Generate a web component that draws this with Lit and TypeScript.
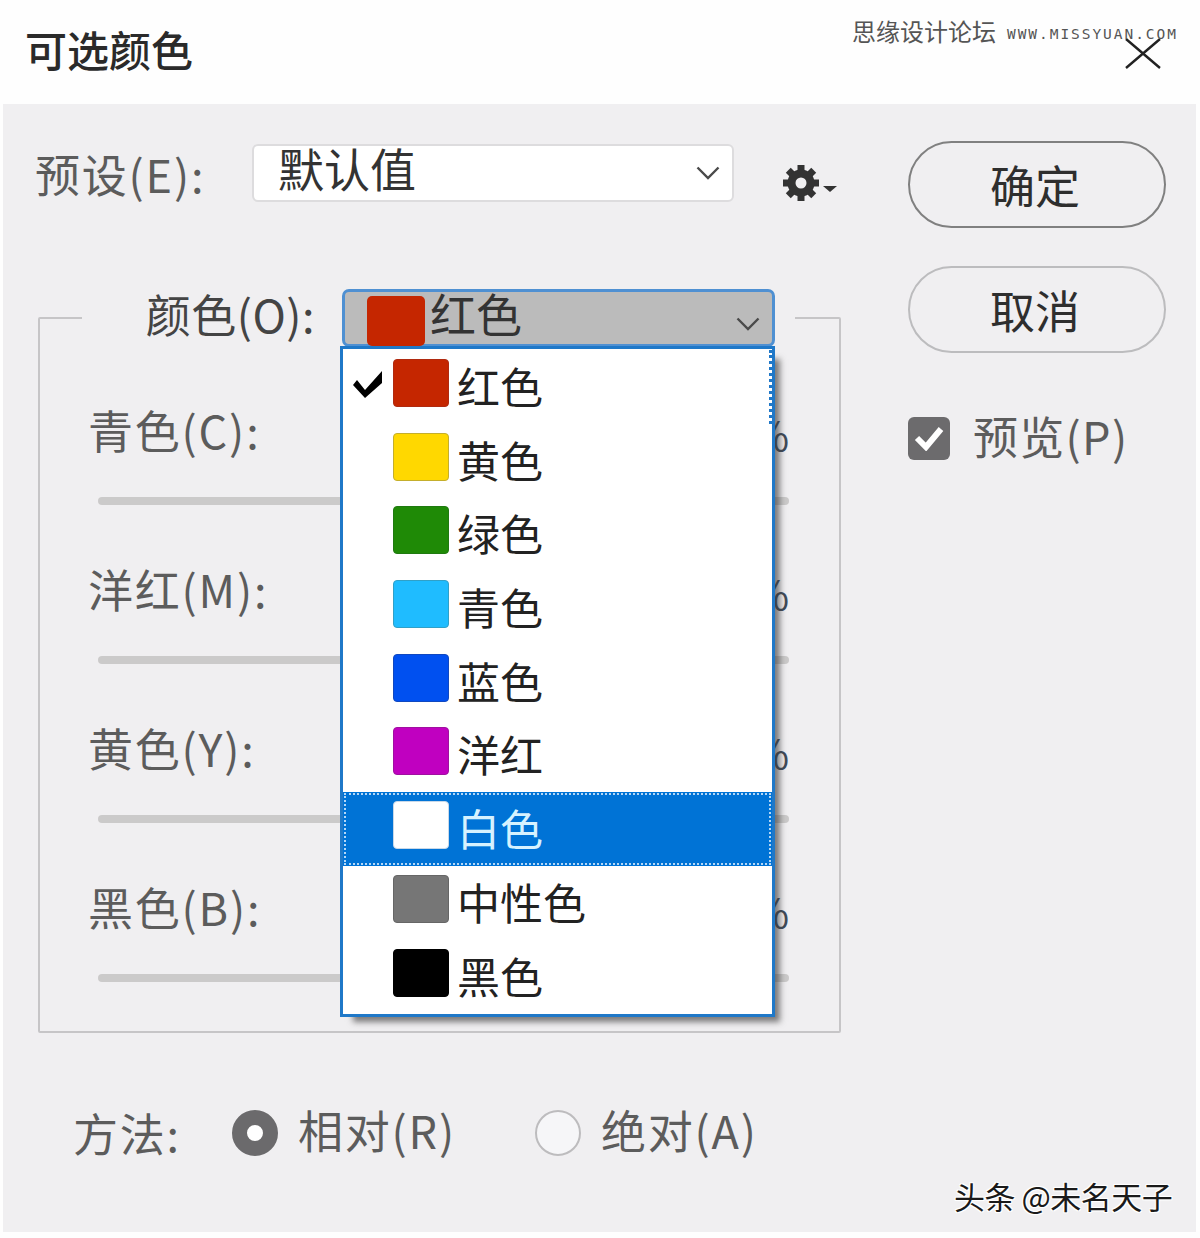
import { LitElement, html, css, svg } from 'lit';
import { customElement, state } from 'lit/decorators.js';
import { classMap } from 'lit/directives/class-map.js';

const COLORS = [
  { name: '红色', swatch: '#c52600', edge: '#b02a10' },
  { name: '黄色', swatch: '#ffd800', edge: '#c4ae2c' },
  { name: '绿色', swatch: '#1f8a06', edge: '#1f7a10' },
  { name: '青色', swatch: '#1fbcff', edge: '#30a0c8' },
  { name: '蓝色', swatch: '#0050f0', edge: '#1048c0' },
  { name: '洋红', swatch: '#c000c0', edge: '#a010a0' },
  { name: '白色', swatch: '#ffffff', edge: '#c8d8e8' },
  { name: '中性色', swatch: '#767676', edge: '#666666' },
  { name: '黑色', swatch: '#000000', edge: '#000000' },
];

const SLIDERS = ['青色(C):', '洋红(M):', '黄色(Y):', '黑色(B):'];

const chevron = html`
  <svg class="chevron" viewBox="0 0 24 14" fill="none" stroke="currentColor" stroke-width="2.4">
    <path d="M1.5 1.5 12 12 22.5 1.5" />
  </svg>
`;

const TEETH = [0, 45, 90, 135];

@customElement('app-root')
export class AppRoot extends LitElement {
  static styles = css`
    :host {
      display: block;
      position: relative;
      width: 1200px;
      height: 1238px;
      overflow: hidden;
      background: #fefefe;
      font-family: 'Noto Sans CJK SC', 'Noto Sans', sans-serif;
      color: #5c5c5c;
    }

    /* Title bar */
    .titlebar {
      height: 104px;
      display: flex;
      align-items: center;
      justify-content: space-between;
      padding: 0 39px 6px 25px;
      box-sizing: border-box;
    }

    .title {
      font-size: 42px;
      font-weight: 500;
      line-height: 1;
      color: #2a2a2a;
    }

    .close {
      width: 36px;
      height: 31px;
      margin-top: 8px;
      color: #222;
    }

    /* Body */
    .body {
      display: flex;
      margin: 0 4px 0 3px;
      height: 1128px;
      background: #f0eff1;
      padding-left: 32px;
    }

    .main {
      width: 806px;
      flex: none;
    }

    .side {
      width: 258px;
      margin-left: 67px;
      padding-top: 37px;
      display: flex;
      flex-direction: column;
    }

    /* Preset row */
    .preset {
      display: flex;
      align-items: center;
      margin-top: 40px;
      height: 58px;
    }

    .label {
      font-size: 45px;
      line-height: 60px;
      letter-spacing: 1.8px;
      white-space: nowrap;
    }

    .preset .label {
      width: 217px;
      flex: none;
      margin-top: 2px;
    }

    .preset-select {
      width: 482px;
      height: 58px;
      flex: none;
      box-sizing: border-box;
      display: flex;
      align-items: center;
      justify-content: space-between;
      padding: 0 12px 0 24px;
      background: #fff;
      border: 2px solid #dddcde;
      border-radius: 6px;
      font-size: 46px;
      color: #333;
    }

    .preset-select span {
      margin-top: -12px;
    }

    .chevron {
      width: 24px;
      height: 14px;
      color: #4a4a4a;
    }

    .gear {
      width: 38px;
      height: 38px;
      margin: 20px 0 0 48px;
      color: #333;
    }

    .gear-caret {
      width: 14px;
      height: 6px;
      margin: 32px 0 0 3px;
      color: #333;
    }

    /* Colour group */
    fieldset {
      margin: 87px 0 0 3px;
      padding: 53px 0 49px;
      width: 803px;
      box-sizing: border-box;
      border: 2px solid #c6c5c7;
      border-radius: 2px;
      min-width: 0;
    }

    legend {
      margin-left: 42px;
      padding: 0;
      width: 713px;
      height: 58px;
    }

    .legend-row {
      display: flex;
      align-items: center;
      justify-content: flex-end;
      padding-right: 20px;
      gap: 27px;
    }

    .legend-row > .label {
      color: #444;
      letter-spacing: 0.5px;
      margin-top: -8px;
    }

    .color-select {
      position: relative;
      width: 433px;
      height: 58px;
      box-sizing: border-box;
      flex: none;
      display: flex;
      align-items: center;
      padding: 5px 12px 0 22px;
      background: #bbbbbb;
      border: 3px solid #4f90d2;
      border-radius: 7px;
      color: #333;
      font-size: 46px;
    }

    .color-select > .chip {
      width: 58px;
      height: 50px;
      border-radius: 5px;
      background: #c52600;
      flex: none;
    }

    .color-select > .name {
      margin: -18px auto 0 5px;
      line-height: 1;
    }

    .color-select > .chevron {
      margin-top: 6px;
    }

    /* Dropdown list */
    .menu {
      position: absolute;
      left: -5px;
      top: 54px;
      z-index: 2;
      width: 435px;
      height: 671px;
      box-sizing: border-box;
      padding-top: 1px;
      background: #fff;
      border: 3px solid #1f78c8;
      box-shadow: 9px 9px 6px -4px rgba(60, 60, 60, 0.65);
    }

    .item {
      height: 73.7px;
      box-sizing: border-box;
      position: relative;
      display: flex;
      padding: 9px 0 0 50px;
      gap: 8px;
      color: #222;
      font-size: 43px;
    }

    .item .chip {
      width: 56px;
      height: 48px;
      box-sizing: border-box;
      border: 1.5px solid;
      border-radius: 4px;
      flex: none;
    }

    .item .name {
      line-height: 52px;
    }

    .item.first {
      border-right: 3px dotted #1f78c8;
    }

    .item.active {
      background: #0073d6;
      color: #d6f2ff;
      outline: 2px dotted rgba(225, 240, 255, 0.8);
      outline-offset: -3px;
    }

    .check {
      position: absolute;
      left: 10px;
      top: 21px;
      width: 30px;
      height: 30px;
      color: #000;
    }

    /* Sliders */
    .slider {
      padding-left: 48px;
    }

    .slider + .slider {
      margin-top: 54px;
    }

    .slider-top {
      display: flex;
      justify-content: space-between;
    }

    .percent {
      color: #3f4a58;
      font-size: 40px;
      line-height: 46px;
      margin: 11px 50px 3px 0;
    }

    .track {
      height: 8px;
      margin: 37px 50px 0 10px;
      border-radius: 4px;
      background: #cbcaca;
    }

    /* Method row */
    .method {
      display: flex;
      align-items: center;
      margin-top: 68px;
      padding-left: 38px;
      height: 60px;
    }

    .method .lead {
      width: 159px;
      flex: none;
      margin-top: 4px;
    }

    .option {
      display: flex;
      align-items: center;
      gap: 20px;
      width: 303px;
      flex: none;
    }

    .radio {
      width: 46px;
      height: 46px;
      box-sizing: border-box;
      flex: none;
      border-radius: 50%;
      margin-top: 4px;
      border: 2px solid #bdbcbe;
      background: #f6f6f8;
    }

    .radio.on {
      border: 15px solid #6b6a6c;
      background: #fff;
    }

    .option .label {
      margin-top: -2px;
    }

    /* Right column */
    .btn {
      height: 87px;
      box-sizing: border-box;
      border-radius: 44px;
      display: flex;
      align-items: center;
      justify-content: center;
      font-size: 45px;
      color: #2e2e2e;
      padding-right: 4px;
    }

    .btn.primary {
      border: 2.5px solid #808080;
    }

    .btn.secondary {
      margin-top: 38px;
      border: 2.5px solid #bcbcbe;
    }

    .preview {
      display: flex;
      align-items: center;
      gap: 23px;
      margin-top: 57px;
    }

    .preview .label {
      margin-top: -4px;
      letter-spacing: 1.3px;
    }

    .box {
      width: 42px;
      height: 43px;
      flex: none;
      border-radius: 6px;
      background: #6c6b6d;
      color: #fff;
      display: flex;
      align-items: center;
      justify-content: center;
    }

    .box svg {
      width: 30px;
      height: 26px;
    }

    /* Watermarks lying over the picture */
    .mark {
      position: absolute;
      white-space: nowrap;
    }

    .mark-cn {
      left: 852px;
      top: 14px;
      font-size: 24px;
      line-height: 34px;
      color: #555;
    }

    .mark-url {
      left: 1007px;
      top: 25px;
      font-family: 'DejaVu Sans Mono', monospace;
      font-size: 14.5px;
      line-height: 18px;
      letter-spacing: 1.95px;
      color: #555;
    }

    .mark-toutiao {
      left: 954px;
      top: 1174px;
      font-size: 31px;
      line-height: 44px;
      color: #1a1a1a;
      letter-spacing: -0.5px;
      text-shadow: 0 0 3px #fff, 1px 1px 0 #fff, -1px -1px 0 #fff, 1px -1px 0 #fff, -1px 1px 0 #fff;
    }
  `;

  @state()
  private activeIndex = 6;

  @state()
  private selectedIndex = 0;

  private renderGear() {
    return html`
      <svg class="gear" viewBox="0 0 38 38" fill="none" stroke="currentColor">
        ${TEETH.map(
          (a) => svg`<line x1="19" y1="1" x2="19" y2="37" stroke-width="7" transform="rotate(${a} 19 19)" />`
        )}
        <circle cx="19" cy="19" r="9.5" stroke-width="8" fill="#f0eff1" />
      </svg>
      <svg class="gear-caret" viewBox="0 0 14 6" fill="currentColor"><path d="M0 0h14L7 6z" /></svg>
    `;
  }

  private renderItem(color: (typeof COLORS)[number], i: number) {
    const classes = {
      item: true,
      first: i === 0,
      active: i === this.activeIndex,
    };
    return html`
      <div class=${classMap(classes)}>
        ${i === this.selectedIndex
          ? html`<svg class="check" viewBox="0 0 30 30" fill="currentColor">
              <path d="M0 14 12 27 29 12V0L12 19 4 9z" />
            </svg>`
          : ''}
        <span class="chip" style="background:${color.swatch};border-color:${color.edge}"></span>
        <span class="name">${color.name}</span>
      </div>
    `;
  }

  render() {
    return html`
      <div class="titlebar">
        <div class="title">可选颜色</div>
        <svg class="close" viewBox="0 0 36 31" fill="none" stroke="currentColor" stroke-width="2.4">
          <path d="M1 1 35 30M35 1 1 30" />
        </svg>
      </div>

      <div class="body">
        <div class="main">
          <div class="preset">
            <span class="label">预设(E):</span>
            <div class="preset-select"><span>默认值</span>${chevron}</div>
            ${this.renderGear()}
          </div>

          <fieldset>
            <legend>
              <div class="legend-row">
                <span class="label">颜色(O):</span>
                <div class="color-select">
                  <span class="chip"></span>
                  <span class="name">红色</span>
                  ${chevron}
                  <div class="menu">${COLORS.map((c, i) => this.renderItem(c, i))}</div>
                </div>
              </div>
            </legend>
            ${SLIDERS.map(
              (s) => html`
                <div class="slider">
                  <div class="slider-top">
                    <span class="label">${s}</span>
                    <span class="percent">%</span>
                  </div>
                  <div class="track"></div>
                </div>
              `
            )}
          </fieldset>

          <div class="method">
            <span class="label lead">方法:</span>
            <div class="option">
              <span class="radio on"></span>
              <span class="label">相对(R)</span>
            </div>
            <div class="option">
              <span class="radio"></span>
              <span class="label">绝对(A)</span>
            </div>
          </div>
        </div>

        <div class="side">
          <div class="btn primary">确定</div>
          <div class="btn secondary">取消</div>
          <div class="preview">
            <span class="box">
              <svg viewBox="0 0 30 26" fill="none" stroke="currentColor" stroke-width="6">
                <path d="M3 13 12 22 27 4" />
              </svg>
            </span>
            <span class="label">预览(P)</span>
          </div>
        </div>
      </div>

      <div class="mark mark-cn">思缘设计论坛</div>
      <div class="mark mark-url">WWW.MISSYUAN.COM</div>
      <div class="mark mark-toutiao">头条 @未名天子</div>
    `;
  }
}

declare global {
  interface HTMLElementTagNameMap {
    'app-root': AppRoot;
  }
}
